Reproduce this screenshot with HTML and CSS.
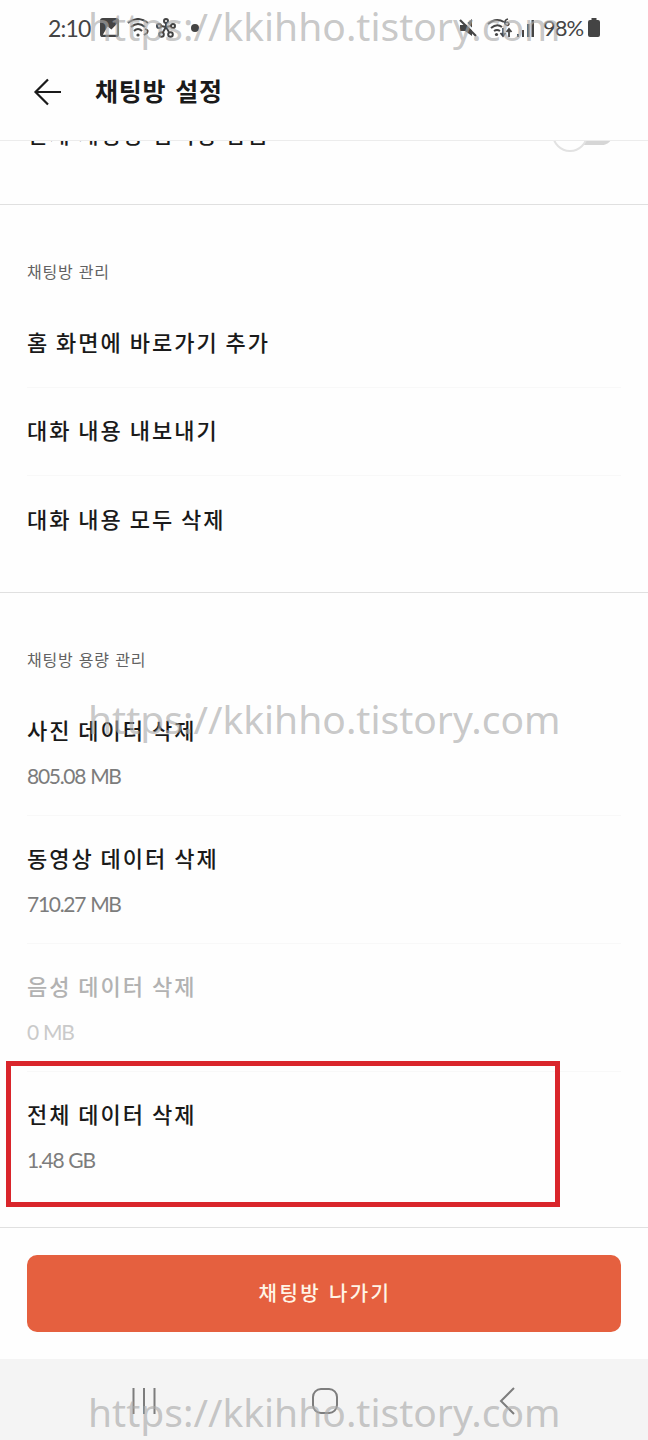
FILE: index.html
```html
<!DOCTYPE html>
<html lang="ko">
<head>
    <meta charset="UTF-8">
    <meta name="viewport" content="width=device-width, initial-scale=1.0">
    <title>채팅방 설정</title>
    <link rel="stylesheet" href="styles.css">
</head>
<body>
    <div class="screen">
        <div class="status-bar">
            <span class="time">2:10</span>
            <svg class="icon-image" width="19" height="19" viewBox="0 0 20 20">
                <path fill="#444" fill-rule="evenodd" d="M3 0h14a3 3 0 0 1 3 3v14a3 3 0 0 1-3 3H3a3 3 0 0 1-3-3V3a3 3 0 0 1 3-3zM3 17.500h15V6l-6 6-4-3z"/>
            </svg>
            <svg class="icon-wifi" width="22" height="20" viewBox="0 0 22 20" fill="none" stroke="#444" stroke-width="2">
                <path d="M1 5q10-8 20 0M4 9q7-6 14 0M7 13q4-4 8 0"/>
                <circle cx="11" cy="17" r="1.6" fill="#444" stroke="none"/>
                <path d="M18 11q4 1 2 4l-3 2" stroke-width="1.8"/>
            </svg>
            <svg class="icon-share" width="20" height="20" viewBox="0 0 20 20" fill="none" stroke="#444" stroke-width="2">
                <path d="M10 9V5M10 9L5 8M10 9l5-1M10 9l-3 5M10 9l3 5"/>
                <circle cx="10" cy="3" r="2"/>
                <circle cx="3" cy="8" r="2"/>
                <circle cx="17" cy="8" r="2"/>
                <circle cx="5.500" cy="16.500" r="2.300"/>
                <circle cx="14.500" cy="16.500" r="2.300"/>
            </svg>
            <span class="dot"></span>
            <svg class="icon-mute" width="18" height="18" viewBox="0 0 18 18">
                <path fill="#444" d="M1 6h5l7-6v17l-7-5H1z"/>
                <path stroke="#fefefe" stroke-width="2" d="M3 0l16 16"/>
                <path stroke="#444" stroke-width="2.200" d="M1 1l16 16"/>
            </svg>
            <svg class="icon-wifi6" width="26" height="20" viewBox="0 0 26 20" fill="none" stroke="#444" stroke-width="2">
                <path d="M1 6q8-7 16-2M4 10q6-5 11-1M7 13q3-2 6 0"/>
                <circle cx="9.500" cy="16.500" r="1.600" fill="#444" stroke="none"/>
                <path d="M21 1q-4 1-3 5 3 3 4 0-1-3-4-1" stroke-width="1.500"/>
                <path d="M16 10v8m-2.500-3l2.500 3 2.500-3M22 19v-8m-2.500 3l2.500-3 2.500 3" stroke-width="1.800"/>
            </svg>
            <svg class="icon-signal" width="17" height="18" viewBox="0 0 17 18" fill="#444">
                <path d="M0 15h2v3H0zM5 11h2v7H5zM10 5h2.500v13H10zM14.500 1H17v17h-2.500z"/>
            </svg>
            <span class="percent">98%</span>
            <svg width="12" height="19" viewBox="0 0 12 19" fill="#444">
                <path d="M3.500 0h5v2H10a2 2 0 0 1 2 2v13a2 2 0 0 1-2 2H2a2 2 0 0 1-2-2V4a2 2 0 0 1 2-2h1.500z"/>
            </svg>
        </div>

        <header class="header">
            <svg width="28" height="28" viewBox="0 0 28 28" fill="none" stroke="#1a1a1a" stroke-width="2.200">
                <path d="M28 14H2M15 1.500L2.500 14 15 26.500"/>
            </svg>
            <h1 class="title">채팅방 설정</h1>
        </header>

        <section class="lock-row">
            <span class="item-name">현재 채팅방 입력창 잠금</span>
            <span class="toggle"><span class="knob"></span></span>
        </section>

        <section class="section">
            <h2 class="label">채팅방 관리</h2>
            <ul class="list">
                <li class="item"><span class="item-name">홈 화면에 바로가기 추가</span></li>
                <li class="item"><span class="item-name">대화 내용 내보내기</span></li>
                <li class="item"><span class="item-name">대화 내용 모두 삭제</span></li>
            </ul>
        </section>

        <section class="section storage">
            <h2 class="label">채팅방 용량 관리</h2>
            <ul class="list">
                <li class="item">
                    <span class="item-name">사진 데이터 삭제</span>
                    <span class="size">805.08 MB</span>
                </li>
                <li class="item">
                    <span class="item-name">동영상 데이터 삭제</span>
                    <span class="size">710.27 MB</span>
                </li>
                <li class="item disabled">
                    <span class="item-name">음성 데이터 삭제</span>
                    <span class="size">0 MB</span>
                </li>
                <li class="item">
                    <span class="item-name">전체 데이터 삭제</span>
                    <span class="size">1.48 GB</span>
                    <span class="highlight"></span>
                </li>
            </ul>
        </section>

        <footer class="footer">
            <button class="leave">채팅방 나가기</button>
        </footer>

        <nav class="nav-bar">
            <svg width="26" height="26" viewBox="0 0 26 26" stroke="#7d7d7d" stroke-width="2">
                <path d="M2.500 0v26M13 0v26M23.500 0v26"/>
            </svg>
            <svg class="nav-home" width="26" height="26" viewBox="0 0 26 26" fill="none" stroke="#7d7d7d" stroke-width="2">
                <rect x="1" y="1" width="24" height="24" rx="8"/>
            </svg>
            <svg width="16" height="28" viewBox="0 0 16 28" fill="none" stroke="#7d7d7d" stroke-width="2">
                <path d="M15 1L2 14l13 13"/>
            </svg>
        </nav>

        <div class="watermark top">https://kkihho.tistory.com</div>
        <div class="watermark middle">https://kkihho.tistory.com</div>
        <div class="watermark bottom">https://kkihho.tistory.com</div>
    </div>
</body>
</html>
```
FILE: styles.css
```css
* {
    box-sizing: border-box;
}

body {
    margin: 0;
    background-color: #fefefe;
    font-family: "Noto Sans CJK KR", sans-serif;
    color: #1a1a1a;
}

.screen {
    position: relative;
    display: flex;
    flex-direction: column;
    height: 1440px;
    overflow: hidden;
}

.status-bar {
    display: flex;
    align-items: center;
    height: 55px;
    padding: 0 48px;
    color: #444;
    font-family: Lato, sans-serif;
    font-size: 23px;
}

.status-bar svg {
    flex-shrink: 0;
}

.time {
    width: 52px;
    letter-spacing: -0.8px;
}

.icon-wifi {
    margin-left: 8px;
}

.icon-share {
    margin-left: 7px;
}

.dot {
    width: 8px;
    height: 8px;
    margin-left: 15px;
    border-radius: 50%;
    background-color: #444;
}

.icon-mute {
    margin-left: auto;
}

.icon-wifi6 {
    margin-left: 10px;
}

.icon-signal {
    margin-left: 4px;
}

.percent {
    width: 41px;
    margin: 0 4px 0 9px;
    font-size: 22px;
    letter-spacing: -1px;
}

.header {
    display: flex;
    align-items: center;
    height: 86px;
    padding: 0 34px 12px 33px;
    border-bottom: 1px solid #ececec;
    background-color: #fefefe;
    z-index: 1;
}

.title {
    margin: -3px 0 0 34px;
    font-size: 25px;
    font-weight: 700;
    letter-spacing: 0.8px;
    word-spacing: 1px;
}

.lock-row {
    display: flex;
    justify-content: space-between;
    align-items: center;
    height: 92px;
    margin-top: -28px;
    padding: 0 35px 52px 27px;
    border-bottom: 1px solid #e0e0e0;
}

.toggle {
    width: 59px;
    height: 23px;
    margin-top: 1px;
    border-radius: 12px;
    background-color: #d6d6d6;
}

.knob {
    display: block;
    width: 36px;
    height: 36px;
    margin: -6px 0 0 -2px;
    border: 2px solid #e2e2e2;
    border-radius: 50%;
    background-color: #fefefe;
}

.section {
    height: 388px;
    padding: 53px 27px 0;
    border-bottom: 1px solid #e0e0e0;
}

.storage {
    height: 635px;
}

.label {
    height: 42px;
    margin: 0;
    color: #626262;
    font-size: 16px;
    font-weight: 400;
    line-height: 26px;
    letter-spacing: 0.8px;
}

.list {
    margin: 0;
    padding: 0;
    list-style: none;
}

.item {
    display: flex;
    align-items: center;
    height: 88px;
    padding-bottom: 5px;
    border-bottom: 1px solid #f8f8f8;
}

.item:last-child {
    border-bottom: none;
}

.item-name {
    font-size: 22px;
    font-weight: 500;
    line-height: 32px;
    letter-spacing: 2px;
    word-spacing: -1.3px;
}

.storage .item {
    position: relative;
    flex-direction: column;
    align-items: flex-start;
    height: 128px;
    padding: 25px 0 0;
}

.size {
    margin-top: 18px;
    color: #7c7c7c;
    font-family: Lato, sans-serif;
    font-size: 21px;
    line-height: 26px;
    letter-spacing: -1.3px;
    word-spacing: 1px;
}

.disabled .item-name {
    color: #b2b2b2;
}

.disabled .size {
    color: #cacaca;
}

/* frame drawn over the last row */
.highlight {
    position: absolute;
    top: -11px;
    left: -21px;
    width: 554px;
    height: 146px;
    border: 5px solid #d9252b;
}

.footer {
    height: 131px;
    padding: 27px 27px 0;
}

.leave {
    width: 100%;
    height: 77px;
    padding: 0 0 2px 2px;
    border: none;
    border-radius: 10px;
    background-color: #e5603f;
    color: #fff5e6;
    font-family: inherit;
    font-size: 20px;
    font-weight: 500;
    letter-spacing: 2.4px;
}

.nav-bar {
    display: flex;
    justify-content: space-between;
    align-items: center;
    flex: 1;
    padding: 2px 133px 0 131px;
    background-color: #f4f4f4;
}

.nav-home {
    margin-right: 6px;
}

.watermark {
    position: absolute;
    left: 88px;
    z-index: 2;
    color: rgba(170, 170, 170, 0.65);
    font-family: "Noto Sans", sans-serif;
    font-size: 39px;
    line-height: 48px;
    white-space: nowrap;
}

.top {
    top: 2px;
}

.middle {
    top: 695px;
}

.bottom {
    top: 1388px;
}
```
